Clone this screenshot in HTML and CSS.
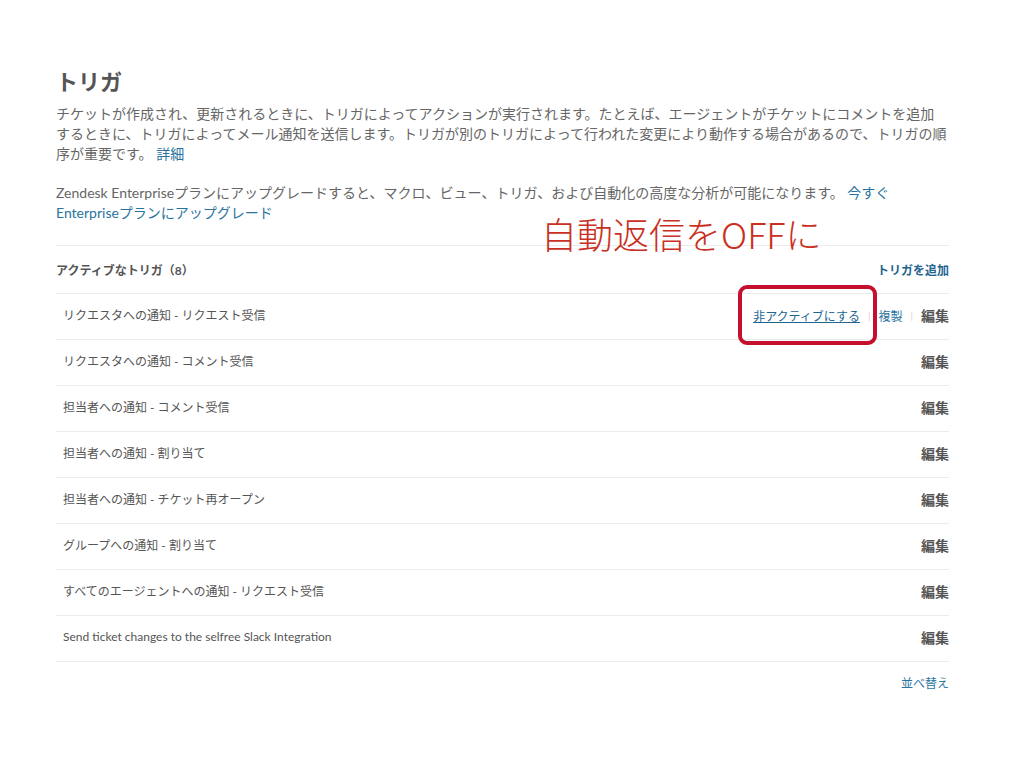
FILE: index.html
```html
<!DOCTYPE html>
<html lang="ja">
<head>
<meta charset="utf-8">
<title>トリガ</title>
<link rel="stylesheet" href="styles.css">
</head>
<body>
<div class="page">
  <h1 class="title">トリガ</h1>
  <p class="desc intro">チケットが作成され、更新されるときに、トリガによってアクションが実行されます。たとえば、エージェントがチケットにコメントを追加<br>するときに、トリガによってメール通知を送信します。トリガが別のトリガによって行われた変更により動作する場合があるので、トリガの順序が重要です。 <a class="link" href="#">詳細</a></p>
  <p class="desc upgrade">Zendesk Enterpriseプランにアップグレードすると、マクロ、ビュー、トリガ、および自動化の高度な分析が可能になります。 <a class="link" href="#">今すぐEnterpriseプランにアップグレード</a></p>

  <div class="list">
    <div class="list-head">
      <span class="head-title">アクティブなトリガ（8）</span>
      <a class="add" href="#">トリガを追加</a>
    </div>
    <div class="row">
      <span class="name">リクエスタへの通知 - リクエスト受信</span>
      <span class="actions">
        <a class="act" href="#">非アクティブにする</a><span class="sep">|</span><a class="act plain" href="#">複製</a><span class="sep">|</span><span class="edit">編集</span>
      </span>
    </div>
    <div class="row"><span class="name">リクエスタへの通知 - コメント受信</span><span class="edit">編集</span></div>
    <div class="row"><span class="name">担当者への通知 - コメント受信</span><span class="edit">編集</span></div>
    <div class="row"><span class="name">担当者への通知 - 割り当て</span><span class="edit">編集</span></div>
    <div class="row"><span class="name">担当者への通知 - チケット再オープン</span><span class="edit">編集</span></div>
    <div class="row"><span class="name">グループへの通知 - 割り当て</span><span class="edit">編集</span></div>
    <div class="row"><span class="name">すべてのエージェントへの通知 - リクエスト受信</span><span class="edit">編集</span></div>
    <div class="row"><span class="name">Send ticket changes to the selfree Slack Integration</span><span class="edit">編集</span></div>
    <div class="list-foot"><a class="sort" href="#">並べ替え</a></div>
  </div>

  <div class="note">自動返信をOFFに</div>
  <div class="highlight"></div>
</div>
</body>
</html>
```

FILE: styles.css
```css
html, body {
  margin: 0;
  padding: 0;
  background: #fff;
}
body {
  font-family: Lato, "Noto Sans CJK JP", sans-serif;
  color: #666;
}
.page {
  position: relative;
  width: 893px;
  margin: 0 0 0 56px;
  padding-top: 68px;
}
.title {
  margin: 0;
  font-size: 22px;
  line-height: 28px;
  font-weight: 700;
  color: #555;
}
.desc {
  margin: 8px 0 0;
  font-size: 14px;
  line-height: 20px;
  color: #666;
}
.upgrade {
  margin-top: 19px;
}
.link {
  color: #2a73a0;
  text-decoration: none;
}
.list {
  margin-top: 22px;
  border-top: 1px solid #ebebeb;
}
.list-head {
  display: flex;
  justify-content: space-between;
  align-items: center;
  height: 47px;
  border-bottom: 1px solid #ebebeb;
}
.head-title {
  font-size: 12px;
  font-weight: 700;
  color: #555;
}
.add {
  font-size: 12px;
  font-weight: 700;
  color: #1f6590;
  text-decoration: none;
}
.row {
  display: flex;
  justify-content: space-between;
  align-items: center;
  height: 45px;
  border-bottom: 1px solid #ebebeb;
}
.name {
  padding-left: 7px;
  font-size: 12px;
  color: #555;
  margin-top: -4px;
}
.actions {
  display: flex;
  align-items: center;
  margin-top: -3px;
}
.act {
  font-size: 12px;
  color: #1f6590;
  text-decoration: underline;
}
.act.plain {
  text-decoration: none;
  color: #2a73a0;
}
.sep {
  font-size: 10px;
  color: #d4d4d4;
  padding: 0 8px;
}
.edit {
  font-size: 14px;
  font-weight: 700;
  color: #555;
  margin-top: -3px;
}
.actions .edit {
  margin-top: 0;
}
.list-foot {
  display: flex;
  justify-content: flex-end;
  padding-top: 12px;
}
.sort {
  font-size: 12px;
  color: #2a73a0;
  text-decoration: none;
}
.note {
  position: absolute;
  left: 485px;
  top: 214px;
  font-family: "Noto Sans CJK JP", sans-serif;
  font-size: 36px;
  line-height: 38px;
  font-weight: 300;
  color: #c9301f;
  white-space: nowrap;
}
.highlight {
  position: absolute;
  left: 682px;
  top: 285px;
  width: 131px;
  height: 52px;
  border: 4px solid #c4102c;
  border-radius: 9px;
}
```
